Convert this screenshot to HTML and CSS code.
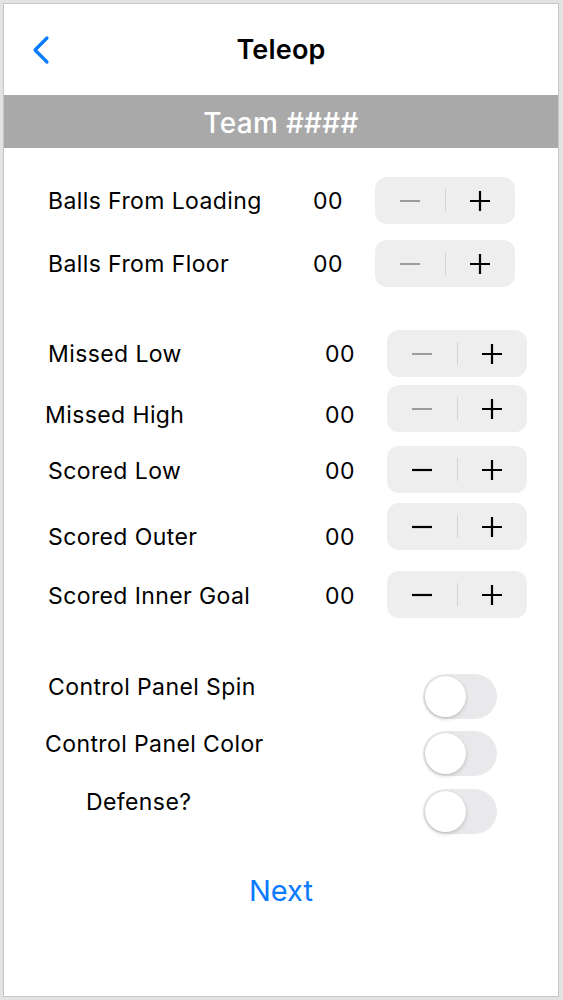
FILE: index.html
```html
<!DOCTYPE html>
<html>
<head>
<meta charset="utf-8">
<link rel="stylesheet" href="styles.css">
</head>
<body>
<div class="frame">
  <header class="nav">
    <div class="back">
      <svg width="18" height="30" viewBox="0 0 18 30"><path d="M15 3 L3 15 L15 27" fill="none" stroke="#0a7aff" stroke-width="3.2" stroke-linecap="round" stroke-linejoin="round"/></svg>
    </div>
    <div class="title">Teleop</div>
    <div></div>
  </header>
  <div class="band">Team ####</div>

  <main class="content">
    <div class="row g1">
      <span class="label">Balls From Loading</span><span class="value">00</span>
      <div class="stepper"><span class="half"><svg width="22" height="4" viewBox="0 0 22 4"><path d="M1 2 H21" stroke="#9c9c9e" stroke-width="2"/></svg></span><span class="div"></span><span class="half"><svg width="22" height="22" viewBox="0 0 22 22"><path d="M1 11 H21 M11 1 V21" stroke="#000" stroke-width="2.2"/></svg></span></div>
    </div>
    <div class="row g1 m16">
      <span class="label">Balls From Floor</span><span class="value">00</span>
      <div class="stepper"><span class="half"><svg width="22" height="4" viewBox="0 0 22 4"><path d="M1 2 H21" stroke="#9c9c9e" stroke-width="2"/></svg></span><span class="div"></span><span class="half"><svg width="22" height="22" viewBox="0 0 22 22"><path d="M1 11 H21 M11 1 V21" stroke="#000" stroke-width="2.2"/></svg></span></div>
    </div>

    <div class="row g2 m43">
      <span class="label">Missed Low</span><span class="value">00</span>
      <div class="stepper"><span class="half"><svg width="22" height="4" viewBox="0 0 22 4"><path d="M1 2 H21" stroke="#9c9c9e" stroke-width="2"/></svg></span><span class="div"></span><span class="half"><svg width="22" height="22" viewBox="0 0 22 22"><path d="M1 11 H21 M11 1 V21" stroke="#000" stroke-width="2.2"/></svg></span></div>
    </div>
    <div class="row g2 m8 low13 left45">
      <span class="label">Missed High</span><span class="value">00</span>
      <div class="stepper"><span class="half"><svg width="22" height="4" viewBox="0 0 22 4"><path d="M1 2 H21" stroke="#9c9c9e" stroke-width="2"/></svg></span><span class="div"></span><span class="half"><svg width="22" height="22" viewBox="0 0 22 22"><path d="M1 11 H21 M11 1 V21" stroke="#000" stroke-width="2.2"/></svg></span></div>
    </div>
    <div class="row g2 m14 low3">
      <span class="label">Scored Low</span><span class="value">00</span>
      <div class="stepper"><span class="half"><svg width="22" height="4" viewBox="0 0 22 4"><path d="M1 2 H21" stroke="#000" stroke-width="2.2"/></svg></span><span class="div"></span><span class="half"><svg width="22" height="22" viewBox="0 0 22 22"><path d="M1 11 H21 M11 1 V21" stroke="#000" stroke-width="2.2"/></svg></span></div>
    </div>
    <div class="row g2 m10 low21">
      <span class="label">Scored Outer</span><span class="value">00</span>
      <div class="stepper"><span class="half"><svg width="22" height="4" viewBox="0 0 22 4"><path d="M1 2 H21" stroke="#000" stroke-width="2.2"/></svg></span><span class="div"></span><span class="half"><svg width="22" height="22" viewBox="0 0 22 22"><path d="M1 11 H21 M11 1 V21" stroke="#000" stroke-width="2.2"/></svg></span></div>
    </div>
    <div class="row g2 m21 low3">
      <span class="label">Scored Inner Goal</span><span class="value">00</span>
      <div class="stepper"><span class="half"><svg width="22" height="4" viewBox="0 0 22 4"><path d="M1 2 H21" stroke="#000" stroke-width="2.2"/></svg></span><span class="div"></span><span class="half"><svg width="22" height="22" viewBox="0 0 22 22"><path d="M1 11 H21 M11 1 V21" stroke="#000" stroke-width="2.2"/></svg></span></div>
    </div>

    <div class="trow m56">
      <span class="tlabel">Control Panel Spin</span>
      <div class="toggle"><span class="knob"></span></div>
    </div>
    <div class="trow m12 left45">
      <span class="tlabel">Control Panel Color</span>
      <div class="toggle"><span class="knob"></span></div>
    </div>
    <div class="trow m13 left86">
      <span class="tlabel">Defense?</span>
      <div class="toggle"><span class="knob"></span></div>
    </div>

    <div class="next">Next</div>
  </main>
</div>
</body>
</html>
```

FILE: styles.css
```css
* { box-sizing: border-box; }
body {
  margin: 0;
  background: #e3e3e3;
  font-family: Inter, "Liberation Sans", sans-serif;
  color: #000;
}
.frame {
  margin: 3px 0 0 3px;
  width: 556px;
  height: 994px;
  border: 1px solid #c6c6c6;
  background: #fff;
}
.nav {
  height: 91px;
  display: grid;
  grid-template-columns: 1fr auto 1fr;
  align-items: center;
}
.back {
  padding-left: 28px;
  display: flex;
  align-items: center;
}
.title {
  font-size: 27px;
  font-weight: 600;
  letter-spacing: 0.2px;
}
.band {
  height: 53px;
  background: #a9a9aa;
  color: #fff;
  font-size: 28px;
  font-weight: 500;
  letter-spacing: 0.3px;
  display: flex;
  align-items: center;
  justify-content: center;
  padding-top: 2px;
}
.content {
  padding: 29px 0 0 44px;
}
.row {
  display: flex;
  align-items: center;
  height: 47px;
}
.label, .value, .tlabel {
  font-size: 23px;
  line-height: 26px;
  letter-spacing: 0.4px;
}
.g1 .label { width: 265px; }
.g2 .label { width: 277px; }
.value { width: 62px; }
.left45 .label, .left45 .tlabel { margin-left: -3px; }
.left45 .label { width: 280px; }
.left86 .tlabel { margin-left: 38px; }
.low3 .label, .low3 .value { margin-top: 3px; }
.low13 .label, .low13 .value { margin-top: 13px; }
.low21 .label, .low21 .value { margin-top: 21px; }
.m8 { margin-top: 8px; }
.m10 { margin-top: 10px; }
.m12 { margin-top: 12px; }
.m13 { margin-top: 13px; }
.m14 { margin-top: 14px; }
.m16 { margin-top: 16px; }
.m21 { margin-top: 21px; }
.m43 { margin-top: 43px; }
.m56 { margin-top: 56px; }

.stepper {
  width: 140px;
  height: 47px;
  border-radius: 12px;
  background: #eeeeef;
  display: flex;
  align-items: center;
}
.half {
  flex: 1;
  display: flex;
  align-items: center;
  justify-content: center;
}
.half svg { display: block; }
.div {
  width: 1px;
  height: 23px;
  background: #d2d2d4;
}

.trow {
  display: flex;
  align-items: flex-start;
  height: 45px;
}
.tlabel {
  flex: 1;
}
.toggle {
  flex: none;
  width: 74px;
  height: 45px;
  border-radius: 23px;
  background: #e9e9eb;
  padding: 2px;
  margin-right: 61px;
  display: flex;
}
.knob {
  width: 41px;
  height: 41px;
  border-radius: 50%;
  background: #fff;
  box-shadow: 0 2px 4px rgba(0,0,0,0.16), 0 0 0 0.5px rgba(0,0,0,0.06);
}
.next {
  margin: 40px 0 0 -44px;
  text-align: center;
  color: #0a7aff;
  font-size: 29px;
  line-height: 34px;
}
```
